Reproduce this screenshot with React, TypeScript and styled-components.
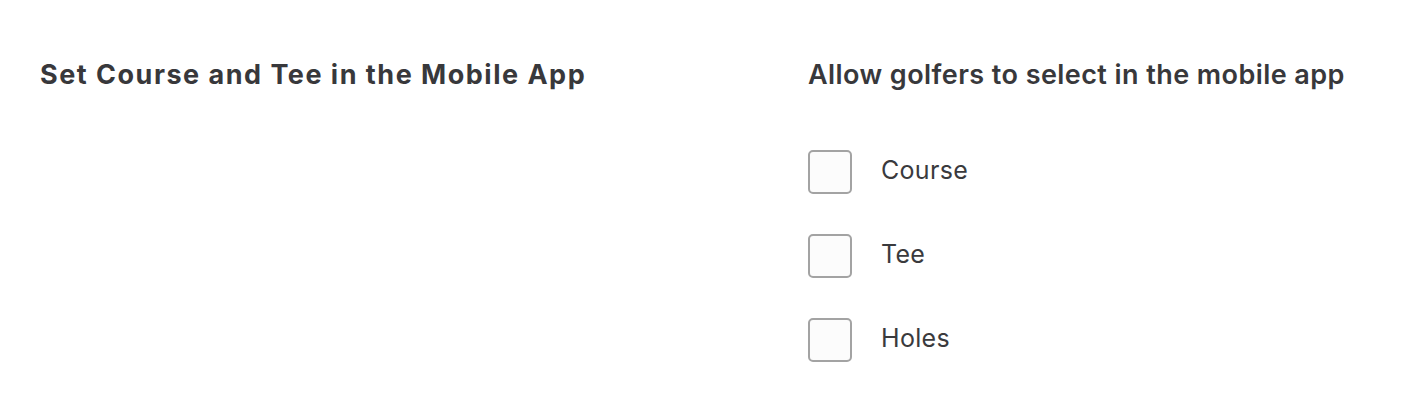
import React from "react";
import styled, { createGlobalStyle } from "styled-components";

const Global = createGlobalStyle`
  html, body { margin: 0; padding: 0; background: #ffffff; }
  body { font-family: "Inter", "Noto Sans", sans-serif; color: #3a3a3d; }
`;

const Page = styled.div`
  display: grid;
  grid-template-columns: 768px 1fr;
  padding: 57px 40px 0 40px;
`;

const Heading = styled.h2<{ $weight: number; $spacing: number }>`
  margin: 0;
  font-size: 27px;
  line-height: 36px;
  font-weight: ${(p) => p.$weight};
  letter-spacing: ${(p) => p.$spacing}px;
  color: #38383b;
  white-space: nowrap;
`;

const Column = styled.div`
  display: flex;
  flex-direction: column;
`;

const Options = styled.div`
  display: flex;
  flex-direction: column;
  gap: 40px;
  margin-top: 57px;
`;

const Option = styled.label`
  display: flex;
  align-items: center;
  gap: 29px;
  cursor: pointer;
`;

const Box = styled.span`
  width: 40px;
  height: 40px;
  border: 2px solid #a3a3a3;
  border-radius: 5px;
  background: #fcfcfc;
  flex-shrink: 0;
`;

const Label = styled.span`
  font-size: 25px;
  line-height: 30px;
  letter-spacing: 0.3px;
  font-weight: 400;
  color: #3a3a3d;
  padding-bottom: 5px;
`;

export default function App() {
  return (
    <>
      <Global />
      <Page>
        <Column>
          <Heading $weight={700} $spacing={1.5}>
            Set Course and Tee in the Mobile App
          </Heading>
        </Column>
        <Column>
          <Heading $weight={600} $spacing={0.43}>
            Allow golfers to select in the mobile app
          </Heading>
          <Options>
            {["Course", "Tee", "Holes"].map((o) => (
              <Option key={o}>
                <Box />
                <Label>{o}</Label>
              </Option>
            ))}
          </Options>
        </Column>
      </Page>
    </>
  );
}
